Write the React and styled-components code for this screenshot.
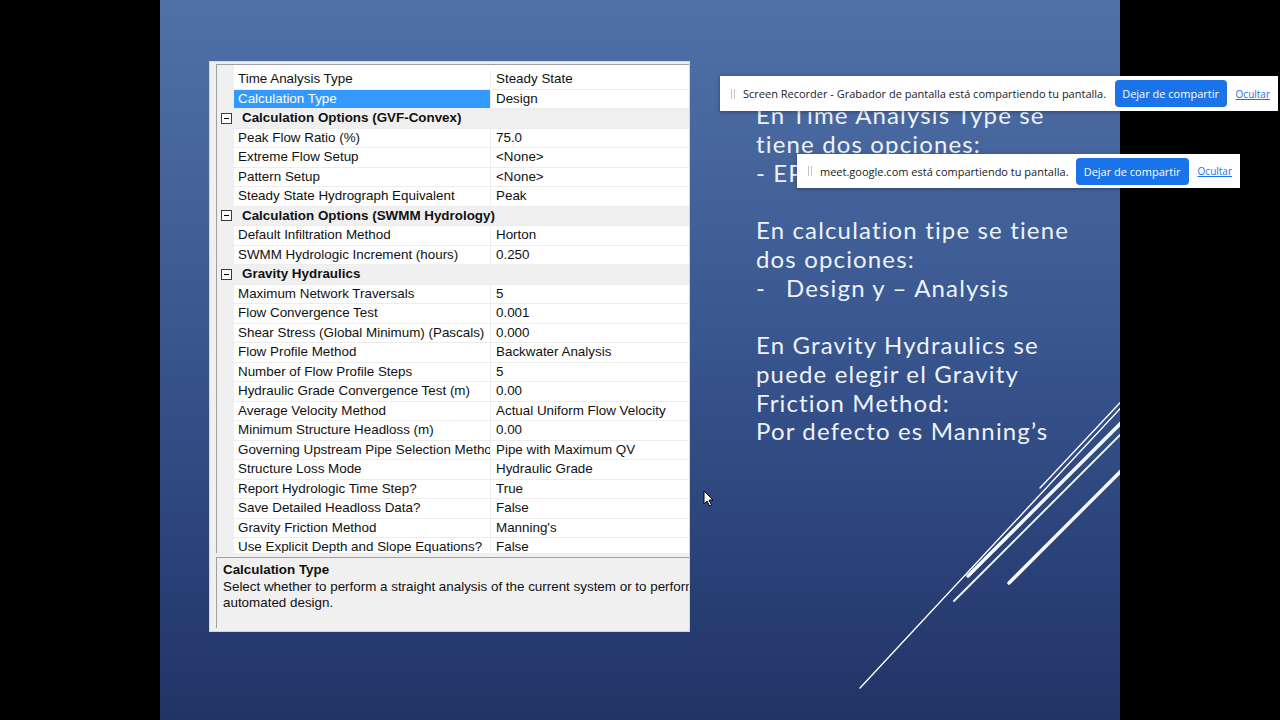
import React from "react";
import styled, { createGlobalStyle } from "styled-components";

const Global = createGlobalStyle`
  html, body { margin: 0; padding: 0; background: #000; }
  body { width: 1280px; height: 720px; overflow: hidden; }
`;

const Page = styled.div`
  position: relative;
  width: 1280px;
  height: 720px;
  background: #000;
  display: flex;
  justify-content: center;
  overflow: hidden;
`;

const Slide = styled.div`
  position: relative;
  width: 960px;
  height: 720px;
  box-sizing: border-box;
  overflow: hidden;
  padding: 61px 0 0 49px;
  display: flex;
  align-items: flex-start;
  background: linear-gradient(
    180deg,
    #4f70a8 0%,
    #46659d 22%,
    #3a5790 45%,
    #2f4880 68%,
    #273c71 86%,
    #223466 100%
  );
`;

/* ---------- property grid window ---------- */

const Panel = styled.div`
  width: 481px;
  height: 571px;
  flex: none;
  box-sizing: border-box;
  background: #f0f0f0;
  border: 1px solid #d4d6da;
  padding: 2px 0 3px 6px;
  display: flex;
  flex-direction: column;
  overflow: hidden;
  font-family: "Liberation Sans", Arial, sans-serif;
  font-size: 13.4px;
  color: #111;
`;

const Grid = styled.div`
  height: 489px;
  flex: none;
  box-sizing: border-box;
  border-top: 1px solid #a0a0a0;
  border-left: 1px solid #a0a0a0;
  padding-top: 5px;
  overflow: hidden;
  background: linear-gradient(to right, #f0f0f0 17px, #fff 17px);
`;

const Row = styled.div`
  display: flex;
  height: 19.5px;
  box-sizing: border-box;
  border-bottom: 1px solid #ededed;
  line-height: 18.5px;
  white-space: nowrap;
  background: ${(p) => (p.$category ? "#f0f0f0" : "#fff")};
`;

const Gutter = styled.div`
  width: 17px;
  flex: none;
  background: #f0f0f0;
  display: flex;
  align-items: center;
`;

const NameCell = styled.div`
  width: 257px;
  flex: none;
  box-sizing: border-box;
  padding-left: 4px;
  overflow: hidden;
  border-right: 1px solid #ededed;
  background: ${(p) => (p.$selected ? "#3399ff" : "#fff")};
  color: ${(p) => (p.$selected ? "#fff" : "#111")};
`;

const ValueCell = styled.div`
  flex: 1;
  min-width: 0;
  padding-left: 5px;
  overflow: hidden;
`;

const CategoryLabel = styled.div`
  padding-left: 8px;
  font-weight: bold;
`;

const CollapseBox = styled.span`
  position: relative;
  width: 9px;
  height: 9px;
  margin-left: 4px;
  border: 1px solid #3a3a3a;
  background: #fff;
  &::after {
    content: "";
    position: absolute;
    left: 2px;
    right: 2px;
    top: 4px;
    height: 1px;
    background: #000;
  }
`;

const Splitter = styled.div`
  height: 4px;
  flex: none;
`;

const Help = styled.div`
  height: 71px;
  flex: none;
  box-sizing: border-box;
  border-top: 1px solid #a0a0a0;
  border-left: 1px solid #a0a0a0;
  padding: 4px 0 0 6px;
  white-space: nowrap;
  overflow: hidden;
`;

const HelpTitle = styled.div`
  font-weight: bold;
  line-height: 15px;
  margin-bottom: 2px;
`;

const HelpText = styled.div`
  line-height: 16px;
`;

/* ---------- slide notes ---------- */

const Notes = styled.div`
  margin: 40px 0 0 66px;
  font-family: "Lato", "DejaVu Sans", sans-serif;
  font-size: 24px;
  letter-spacing: 1.15px;
  line-height: 28.75px;
  color: #eef2f9;
  white-space: nowrap;
`;

const Para = styled.p`
  margin: 0 0 28.75px;
`;

const Dash = styled.span`
  display: inline-block;
  width: 30px;
`;

/* ---------- decorative strokes ---------- */

const Strokes = styled.svg`
  position: absolute;
  left: 0;
  top: 0;
  width: 960px;
  height: 720px;
  pointer-events: none;
`;

/* ---------- screen-share notices ---------- */

const ShareBar = styled.div`
  position: absolute;
  left: ${(p) => p.$x}px;
  top: ${(p) => p.$y}px;
  width: ${(p) => p.$w}px;
  height: ${(p) => p.$h}px;
  box-sizing: border-box;
  padding: 0 8px 0 11px;
  display: flex;
  align-items: center;
  background: #fff;
  box-shadow: 0 1px 4px rgba(0, 0, 0, 0.35);
  font-family: "Open Sans", "Noto Sans", sans-serif;
  font-size: 11px;
  color: #202124;
  white-space: nowrap;
`;

const Grip = styled.span`
  width: 4px;
  height: 10px;
  flex: none;
  margin-right: 8px;
  border-left: 1px solid #c4c4c4;
  border-right: 1px solid #c4c4c4;
  box-sizing: border-box;
`;

const Message = styled.span`
  flex: 1;
`;

const StopButton = styled.button`
  width: ${(p) => p.$w}px;
  height: 27px;
  flex: none;
  padding: 0;
  border: none;
  border-radius: 4px;
  background: #1a73e8;
  color: #fff;
  font-family: inherit;
  font-size: 11px;
`;

const HideLink = styled.a`
  margin-left: 9px;
  color: #1a73e8;
  text-decoration: underline;
  font-size: 10px;
`;

const Pointer = styled.svg`
  position: absolute;
  left: 703px;
  top: 490px;
  width: 11px;
  height: 17px;
`;

const rows = [
  { n: "Time Analysis Type", v: "Steady State" },
  { n: "Calculation Type", v: "Design", sel: true },
  { cat: "Calculation Options (GVF-Convex)" },
  { n: "Peak Flow Ratio (%)", v: "75.0" },
  { n: "Extreme Flow Setup", v: "<None>" },
  { n: "Pattern Setup", v: "<None>" },
  { n: "Steady State Hydrograph Equivalent", v: "Peak" },
  { cat: "Calculation Options (SWMM Hydrology)" },
  { n: "Default Infiltration Method", v: "Horton" },
  { n: "SWMM Hydrologic Increment (hours)", v: "0.250" },
  { cat: "Gravity Hydraulics" },
  { n: "Maximum Network Traversals", v: "5" },
  { n: "Flow Convergence Test", v: "0.001" },
  { n: "Shear Stress (Global Minimum) (Pascals)", v: "0.000" },
  { n: "Flow Profile Method", v: "Backwater Analysis" },
  { n: "Number of Flow Profile Steps", v: "5" },
  { n: "Hydraulic Grade Convergence Test (m)", v: "0.00" },
  { n: "Average Velocity Method", v: "Actual Uniform Flow Velocity" },
  { n: "Minimum Structure Headloss (m)", v: "0.00" },
  { n: "Governing Upstream Pipe Selection Method", v: "Pipe with Maximum QV" },
  { n: "Structure Loss Mode", v: "Hydraulic Grade" },
  { n: "Report Hydrologic Time Step?", v: "True" },
  { n: "Save Detailed Headloss Data?", v: "False" },
  { n: "Gravity Friction Method", v: "Manning's" },
  { n: "Use Explicit Depth and Slope Equations?", v: "False" },
];

function PropertyGrid() {
  return (
    <Panel>
      <Grid>
        {rows.map((r, i) =>
          r.cat ? (
            <Row key={i} $category>
              <Gutter>
                <CollapseBox />
              </Gutter>
              <CategoryLabel>{r.cat}</CategoryLabel>
            </Row>
          ) : (
            <Row key={i}>
              <Gutter />
              <NameCell $selected={r.sel}>{r.n}</NameCell>
              <ValueCell>{r.v}</ValueCell>
            </Row>
          )
        )}
      </Grid>
      <Splitter />
      <Help>
        <HelpTitle>Calculation Type</HelpTitle>
        <HelpText>
          Select whether to perform a straight analysis of the current system or to perform an
          <br />
          automated design.
        </HelpText>
      </Help>
    </Panel>
  );
}

function SlideNotes() {
  return (
    <Notes>
      <Para>
        En Time Analysis Type se
        <br />
        tiene dos opciones:
        <br />- EPS y – Steady State
      </Para>
      <Para>
        En calculation tipe se tiene
        <br />
        dos opciones:
        <br />
        <Dash>-</Dash>Design y – Analysis
      </Para>
      <Para>
        En Gravity Hydraulics se
        <br />
        puede elegir el Gravity
        <br />
        Friction Method:
        <br />
        Por defecto es Manning’s
      </Para>
    </Notes>
  );
}

export default function App() {
  return (
    <>
      <Global />
      <Page>
        <Slide>
          <PropertyGrid />
          <SlideNotes />
          <Strokes viewBox="0 0 960 720">
            <g stroke="#fff" strokeLinecap="round" fill="none">
              <line x1="700" y1="688" x2="970" y2="398" strokeWidth="1.4" />
              <line x1="880" y1="488" x2="970" y2="392" strokeWidth="1.4" />
              <line x1="808" y1="576" x2="970" y2="414" strokeWidth="3.4" />
              <line x1="794" y1="601" x2="970" y2="425" strokeWidth="1.8" />
              <line x1="849" y1="583" x2="970" y2="462" strokeWidth="3.4" />
            </g>
          </Strokes>
        </Slide>

        <ShareBar $x={720} $y={76} $w={558} $h={35}>
          <Grip />
          <Message>Screen Recorder - Grabador de pantalla está compartiendo tu pantalla.</Message>
          <StopButton $w={112}>Dejar de compartir</StopButton>
          <HideLink>Ocultar</HideLink>
        </ShareBar>

        <ShareBar $x={797} $y={154} $w={443} $h={34}>
          <Grip />
          <Message>meet.google.com está compartiendo tu pantalla.</Message>
          <StopButton $w={113}>Dejar de compartir</StopButton>
          <HideLink>Ocultar</HideLink>
        </ShareBar>

        <Pointer viewBox="0 0 11 17">
          <path
            d="M1 1 L1 14 L4 11 L6.5 16 L8.5 15 L6 10 L10 10 Z"
            fill="#fff"
            stroke="#000"
            strokeWidth="1"
            strokeLinejoin="round"
          />
        </Pointer>
      </Page>
    </>
  );
}
